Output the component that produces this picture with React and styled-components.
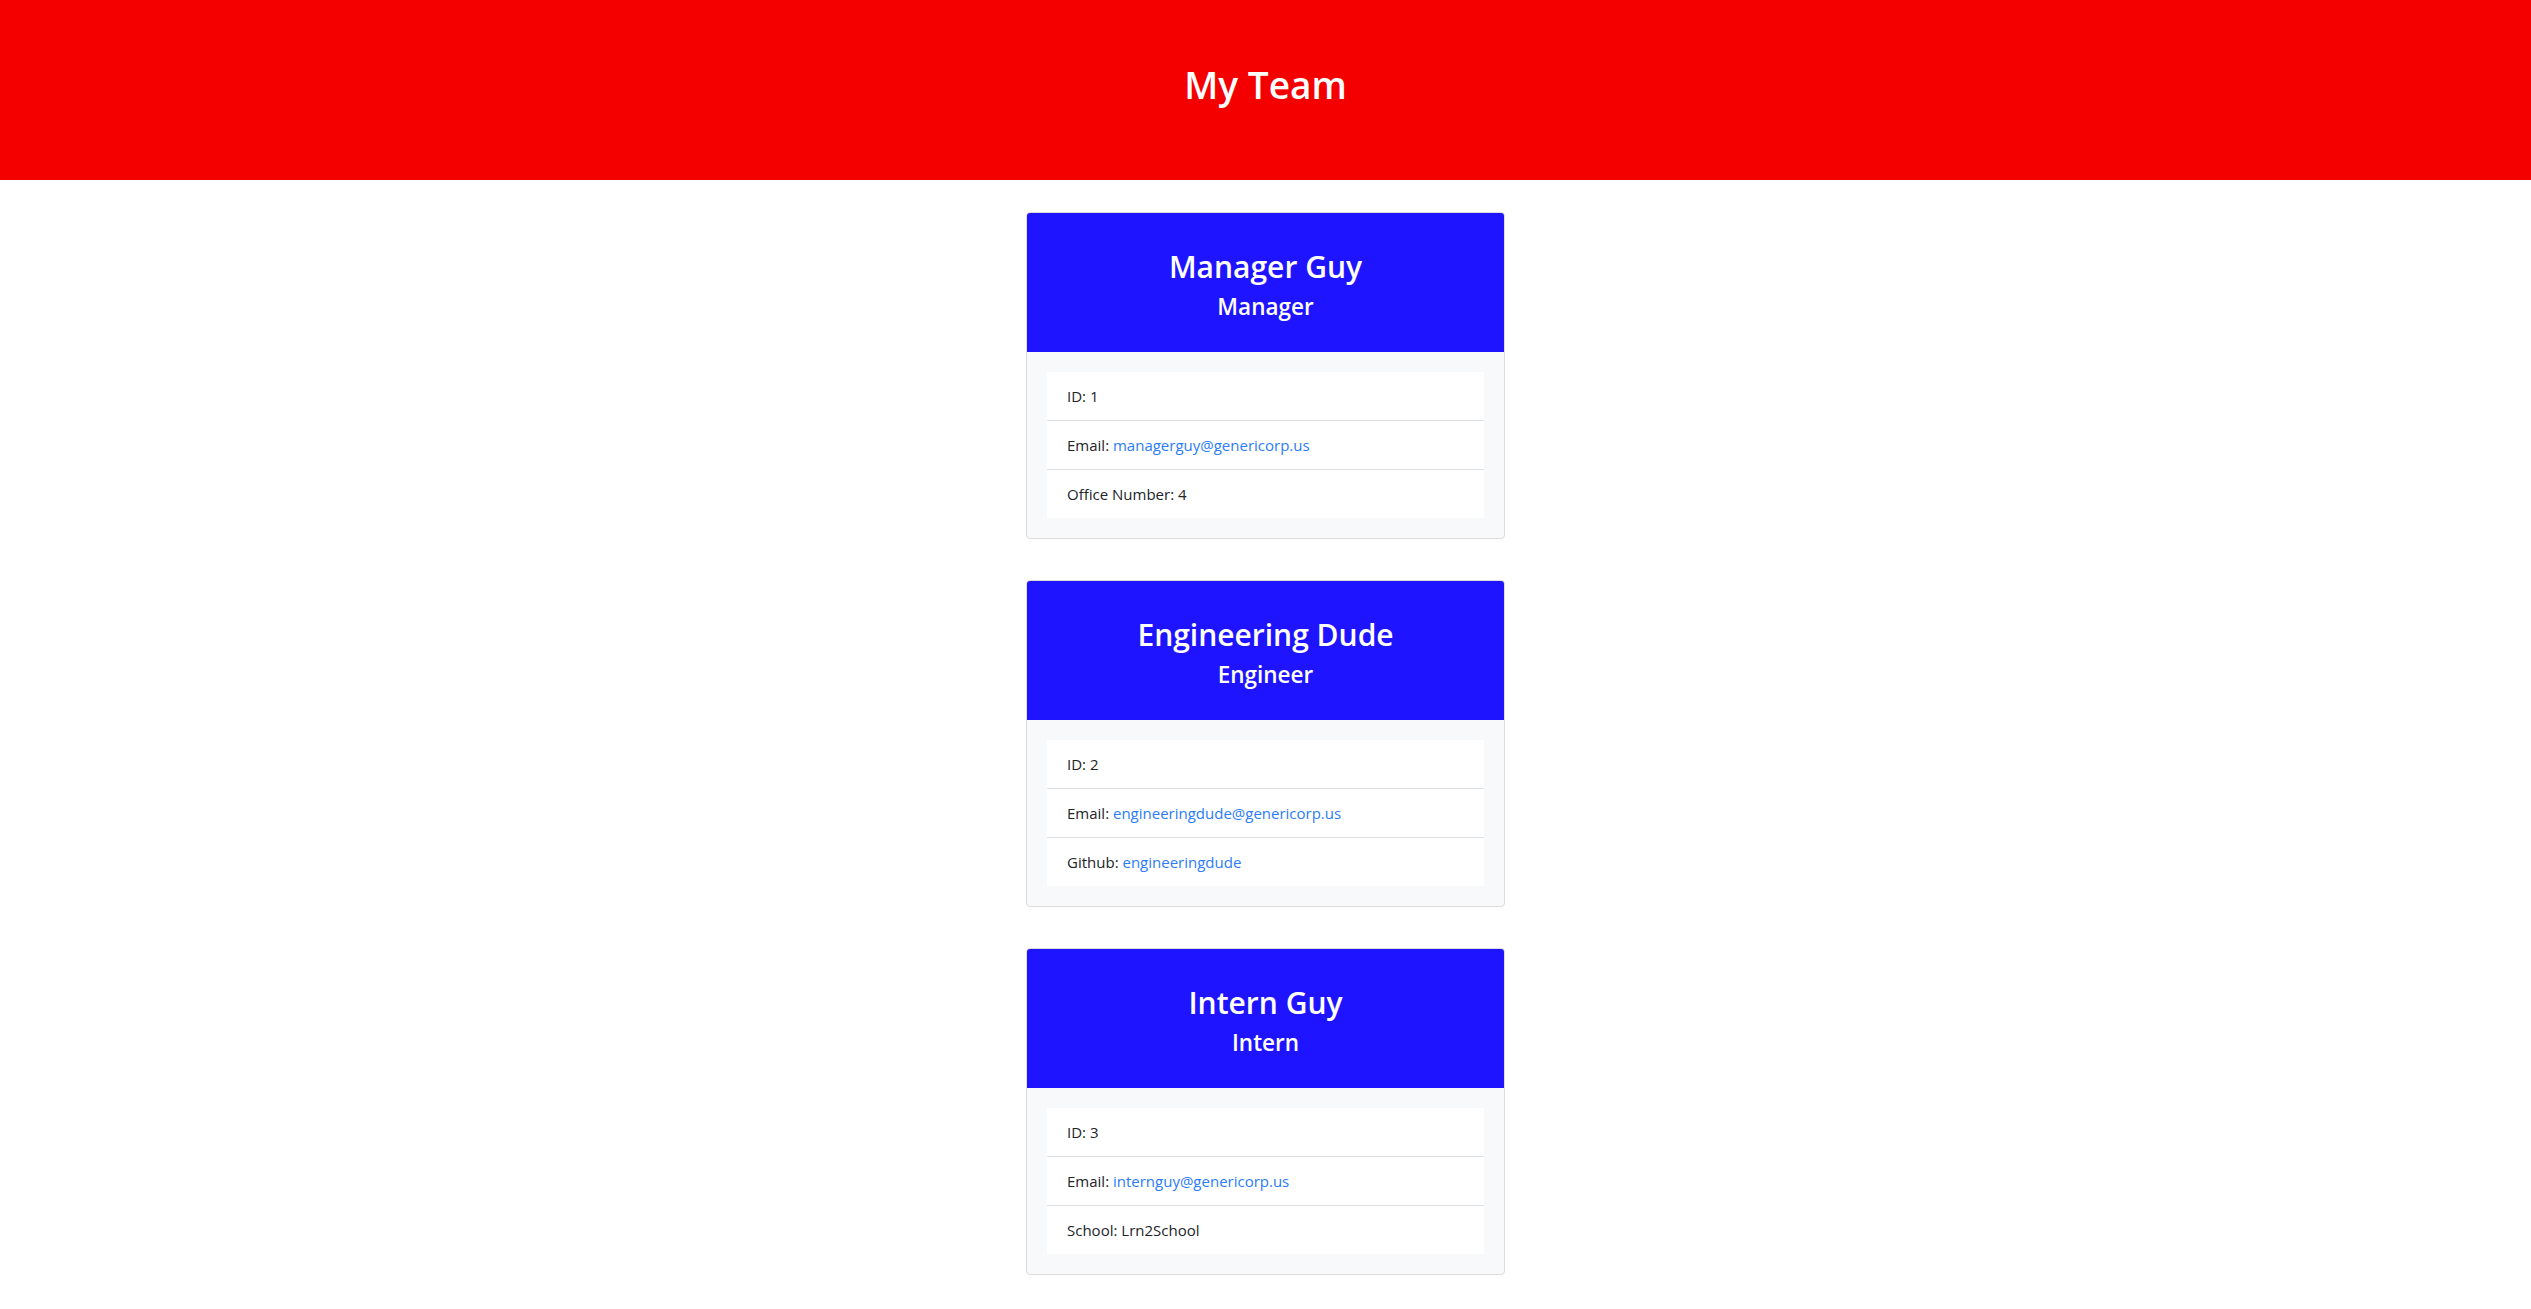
import React from 'react';
import styled, { createGlobalStyle } from 'styled-components';

const GlobalStyle = createGlobalStyle`
  * {
    box-sizing: border-box;
  }

  body {
    margin: 0;
    background: #ffffff;
    color: #212529;
    font-family: "Open Sans", "Noto Sans", sans-serif;
  }
`;

const Banner = styled.header`
  height: 180px;
  padding-top: 63px;
  background-color: #f40000;
  text-align: center;
`;

const BannerTitle = styled.h1`
  margin: 0;
  color: #ffffff;
  font-size: 37px;
  line-height: 44px;
  font-weight: 600;
`;

const Team = styled.main`
  display: flex;
  flex-direction: column;
  align-items: center;
  gap: 41px;
  padding: 32px 0 40px;
`;

const Card = styled.section`
  width: 479px;
  border: 1px solid #dcdcdc;
  border-radius: 4px;
  overflow: hidden;
  background-color: #f8f9fa;
`;

const CardHeader = styled.div`
  padding: 36px 20px 32px;
  background-color: #1f14ff;
  color: #ffffff;
  text-align: center;
`;

const Name = styled.h2`
  margin: 0 0 8px;
  font-size: 30px;
  line-height: 36px;
  font-weight: 600;
`;

const Role = styled.h4`
  margin: 0;
  font-size: 22.5px;
  line-height: 27px;
  font-weight: 600;
`;

const CardBody = styled.div`
  padding: 20px;
`;

const InfoList = styled.ul`
  list-style: none;
  margin: 0;
  padding: 0;
  background: #ffffff;
`;

const InfoItem = styled.li`
  padding: 12px 20px;
  font-size: 15px;
  line-height: 24px;
  & + & {
    border-top: 1px solid #dee2e6;
  }

  a {
    color: #2b7cf6;
    text-decoration: none;
  }
`;

const team = [
  {
    name: 'Manager Guy',
    role: 'Manager',
    id: 1,
    email: 'managerguy@genericorp.us',
    extra: { label: 'Office Number', value: '4' },
  },
  {
    name: 'Engineering Dude',
    role: 'Engineer',
    id: 2,
    email: 'engineeringdude@genericorp.us',
    extra: { label: 'Github', value: 'engineeringdude', href: 'https://github.com/engineeringdude' },
  },
  {
    name: 'Intern Guy',
    role: 'Intern',
    id: 3,
    email: 'internguy@genericorp.us',
    extra: { label: 'School', value: 'Lrn2School' },
  },
];

const EmployeeCard = ({ member }) => (
  <Card>
    <CardHeader>
      <Name>{member.name}</Name>
      <Role>{member.role}</Role>
    </CardHeader>
    <CardBody>
      <InfoList>
        <InfoItem>ID: {member.id}</InfoItem>
        <InfoItem>
          Email: <a href={`mailto:${member.email}`}>{member.email}</a>
        </InfoItem>
        <InfoItem>
          {member.extra.label}:{' '}
          {member.extra.href ? (
            <a href={member.extra.href}>{member.extra.value}</a>
          ) : (
            member.extra.value
          )}
        </InfoItem>
      </InfoList>
    </CardBody>
  </Card>
);

const App = () => {
  return (
    <>
      <GlobalStyle />
      <Banner>
        <BannerTitle>My Team</BannerTitle>
      </Banner>
      <Team>
        {team.map((member) => (
          <EmployeeCard key={member.id} member={member} />
        ))}
      </Team>
    </>
  );
};

export default App;
